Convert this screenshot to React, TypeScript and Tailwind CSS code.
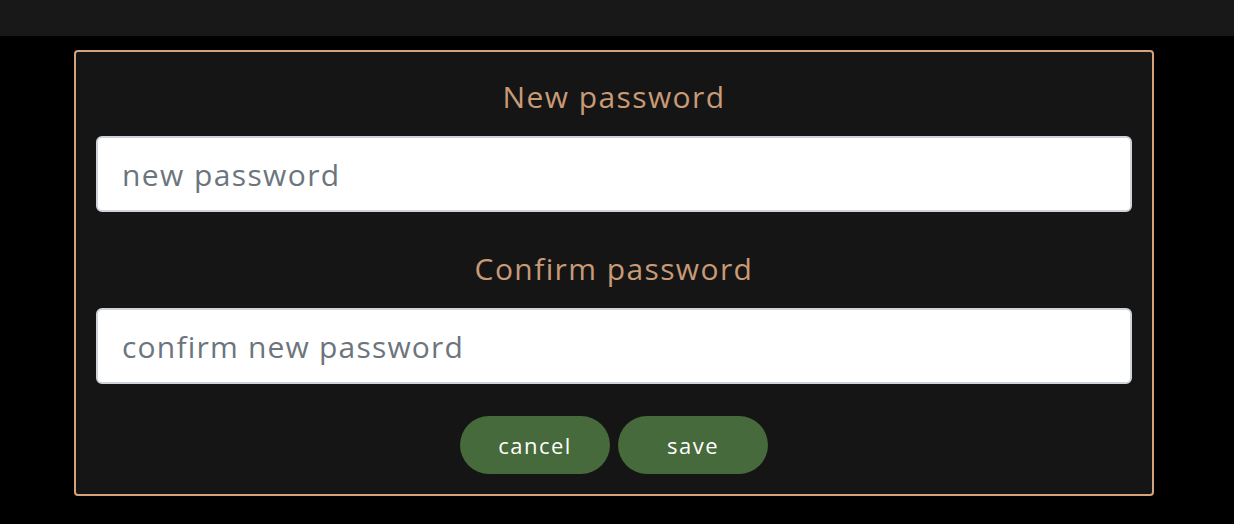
export default function App() {
  return (
    <div className="min-h-[524px] bg-black" style={{ fontFamily: "'Open Sans', 'Noto Sans', sans-serif" }}>
      <div className="h-9 bg-[#181818]" />
      <div className="ml-[74px] mt-[14px] w-[1080px] rounded-[4px] border-2 border-[#d4a47e] bg-[#151515] px-[20px] pt-[24px] pb-[20px]">
        <div className="text-center text-[30px] leading-[42px] tracking-[1.4px] text-[#c89a76]">New password</div>
        <input
          type="password"
          placeholder="new password"
          className="mt-[18px] block h-[76px] w-full rounded-[6px] border-2 border-[#ced4da] bg-white px-[24px] text-[30px] tracking-[1.4px] text-[#495057] outline-none placeholder:text-[#6c757d]"
        />
        <div className="mt-[36px] text-center text-[30px] leading-[42px] tracking-[1.4px] text-[#c89a76]">Confirm password</div>
        <input
          type="password"
          placeholder="confirm new password"
          className="mt-[18px] block h-[76px] w-full rounded-[6px] border-2 border-[#ced4da] bg-white px-[24px] text-[30px] tracking-[1.2px] text-[#495057] outline-none placeholder:text-[#6c757d]"
        />
        <div className="mt-[32px] flex justify-center gap-[8px]">
          <button className="h-[58px] w-[150px] rounded-full bg-[#466a3c] text-[22px] tracking-[1.5px] text-white">cancel</button>
          <button className="h-[58px] w-[150px] rounded-full bg-[#466a3c] text-[22px] tracking-[1.5px] text-white">save</button>
        </div>
      </div>
    </div>
  );
}
